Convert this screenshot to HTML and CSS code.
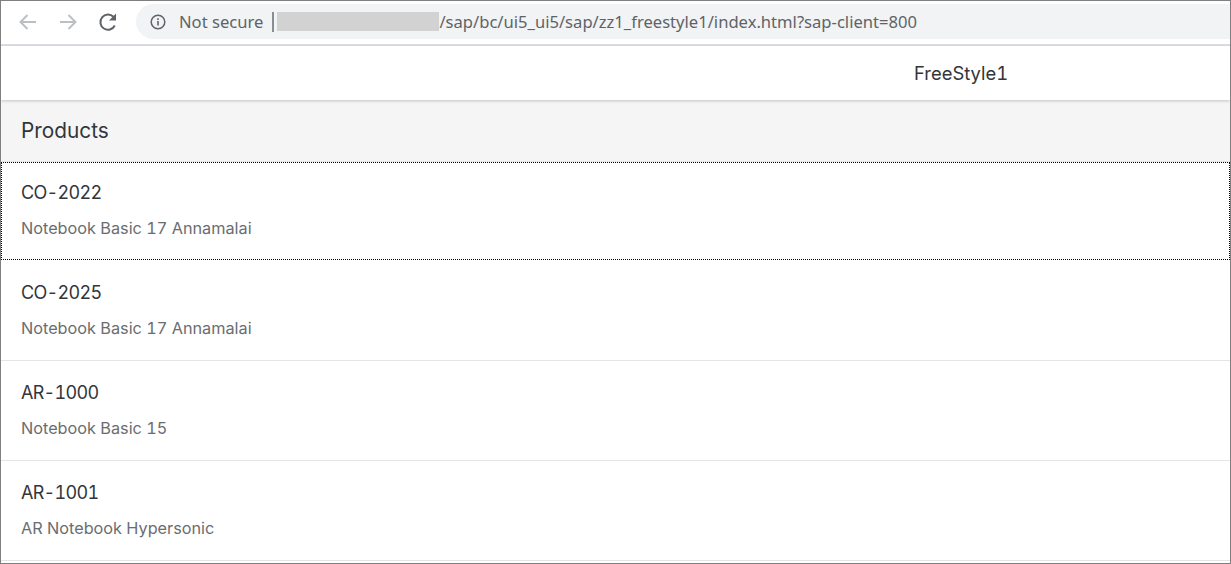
FILE: index.html
```html
<!DOCTYPE html>
<html lang="en">
<head>
  <meta charset="UTF-8">
  <title>FreeStyle1</title>
  <link rel="stylesheet" href="styles.css">
</head>
<body>
  <div class="toolbar">
    <svg class="nav-icon" width="24" height="24" viewBox="0 0 24 24"><path d="M20 12H5M11.5 5L4.5 12l7 7" fill="none" stroke="#bcbfc3" stroke-width="2"/></svg>
    <svg class="nav-icon" width="24" height="24" viewBox="0 0 24 24"><path d="M4 12h15M12.5 5l7 7-7 7" fill="none" stroke="#bcbfc3" stroke-width="2"/></svg>
    <svg class="nav-icon" width="24" height="24" viewBox="0 0 24 24"><path d="M18.8 15.5A7.6 7.6 0 1 1 17.4 6.8" fill="none" stroke="#5f6368" stroke-width="2"/><path d="M20 3.5v7h-7z" fill="#5f6368"/></svg>
    <div class="address">
      <svg class="info-icon" width="16" height="16" viewBox="0 0 16 16"><circle cx="8" cy="8" r="6.8" fill="none" stroke="#5f6368" stroke-width="1.5"/><path d="M7.2 7h1.6v4.6H7.2zM7.2 4.3h1.6v1.6H7.2z" fill="#5f6368"/></svg>
      <span class="not-secure">Not secure</span>
      <span class="divider"></span>
      <span class="host"></span>
      <span class="path">/sap/bc/ui5_ui5/sap/zz1_freestyle1/index.html?sap-client=800</span>
    </div>
  </div>

  <header class="app-header">FreeStyle1</header>

  <main>
    <div class="list-title">Products</div>
    <div class="list">
      <div class="item focused">
        <div class="item-title">CO-2022</div>
        <div class="item-desc">Notebook Basic 17 Annamalai</div>
      </div>
      <div class="item">
        <div class="item-title">CO-2025</div>
        <div class="item-desc">Notebook Basic 17 Annamalai</div>
      </div>
      <div class="item">
        <div class="item-title">AR-1000</div>
        <div class="item-desc">Notebook Basic 15</div>
      </div>
      <div class="item">
        <div class="item-title">AR-1001</div>
        <div class="item-desc">AR Notebook Hypersonic</div>
      </div>
    </div>
  </main>
</body>
</html>
```

FILE: styles.css
```css
html, body {
  height: 100%;
}

body {
  box-sizing: border-box;
  margin: 0;
  border: 1px solid #7f7f7f;
  background-color: #fff;
  font-family: "Inter", sans-serif;
  font-variant-numeric: tabular-nums;
  overflow: hidden;
  display: flex;
  flex-direction: column;
}

.toolbar {
  flex: none;
  box-sizing: border-box;
  height: 45px;
  padding: 3px 0 5px 15px;
  display: flex;
  align-items: center;
  gap: 16px;
  border-bottom: 2px solid #dddde3;
  font-family: "Noto Sans", sans-serif;
}

.address {
  flex: 1;
  align-self: stretch;
  padding-left: 14px;
  display: flex;
  align-items: center;
  background-color: #f1f3f4;
  border-radius: 18px 0 0 18px;
  font-size: 16.6px;
  color: #5f6368;
}

.info-icon {
  margin-right: 13px;
}

.divider {
  width: 2px;
  height: 20px;
  margin: 0 3px 0 9px;
  background-color: #8a8d91;
}

.host {
  width: 162px;
  height: 19px;
  background-color: #d2d2d2;
}

.app-header {
  flex: none;
  height: 54px;
  line-height: 55px;
  padding-left: 913px;
  font-size: 18.4px;
  color: #32363a;
  box-shadow: 0 1px 3px rgba(0, 0, 0, 0.2);
  position: relative;
}

.list-title {
  box-sizing: border-box;
  height: 62px;
  line-height: 61px;
  padding-left: 20px;
  font-size: 20.8px;
  color: #32363a;
  background-color: #f5f5f5;
  border-bottom: 1px solid #e5e5e5;
}

.item {
  box-sizing: border-box;
  height: 100px;
  padding: 18px 20px 0;
  border-bottom: 1px solid #e5e5e5;
}

.item.focused {
  height: 98px;
  margin-bottom: 1px;
  padding-top: 17px;
  border-bottom: 0;
  outline: 1px dotted #000;
  outline-offset: -1px;
}

.item-title {
  height: 28px;
  line-height: 28px;
  font-size: 18px;
  letter-spacing: -0.7px;
  color: #32363a;
}

.item-desc {
  margin-top: 7px;
  height: 28px;
  line-height: 29px;
  font-size: 16.25px;
  color: #6a6d70;
}
```
